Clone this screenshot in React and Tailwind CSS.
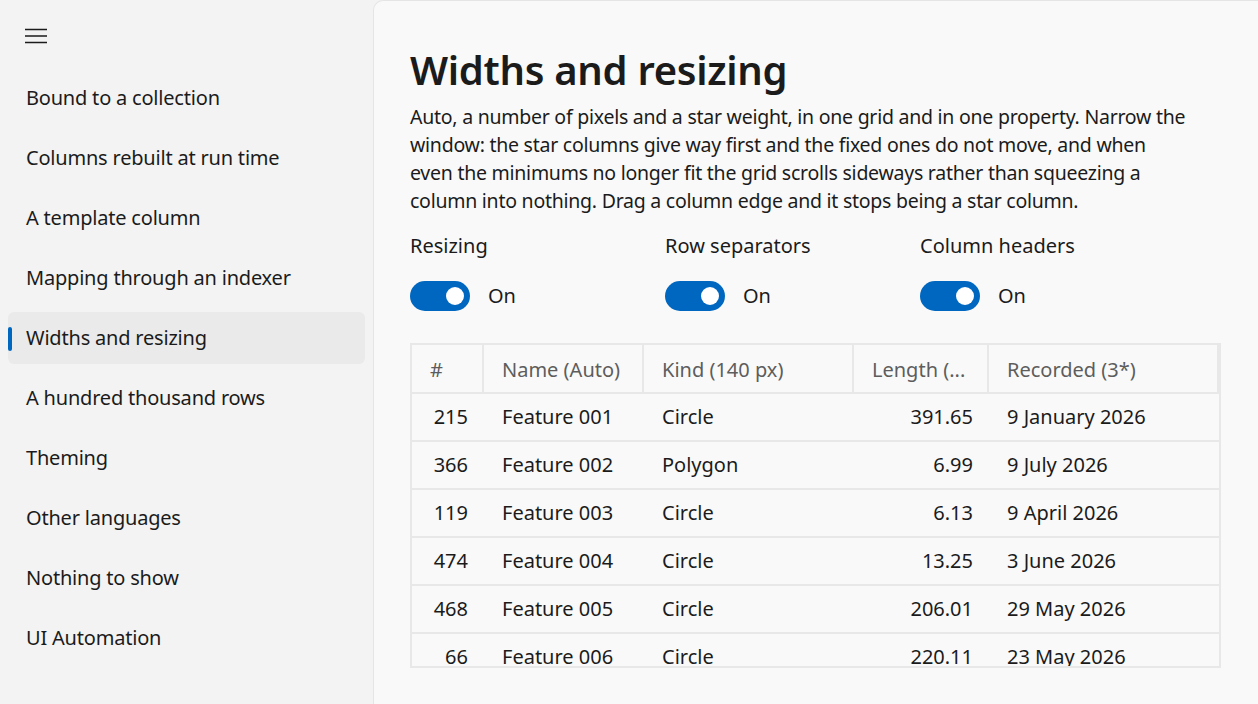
import React from "react";

const nav = [
  "Bound to a collection",
  "Columns rebuilt at run time",
  "A template column",
  "Mapping through an indexer",
  "Widths and resizing",
  "A hundred thousand rows",
  "Theming",
  "Other languages",
  "Nothing to show",
  "UI Automation",
];

const rows = [
  ["215", "Feature 001", "Circle", "391.65", "9 January 2026"],
  ["366", "Feature 002", "Polygon", "6.99", "9 July 2026"],
  ["119", "Feature 003", "Circle", "6.13", "9 April 2026"],
  ["474", "Feature 004", "Circle", "13.25", "3 June 2026"],
  ["468", "Feature 005", "Circle", "206.01", "29 May 2026"],
  ["66", "Feature 006", "Circle", "220.11", "23 May 2026"],
];

const cols = "grid grid-cols-[72px_160px_210px_135px_1fr]";

function Toggle({ label }) {
  return (
    <div className="w-[255px]">
      <div className="h-[30px] leading-[30px]">{label}</div>
      <div className="mt-[20px] flex items-center gap-[18px]">
        <div className="flex h-[30px] w-[60px] items-center justify-end rounded-full bg-[#0067c0] pr-[6px]">
          <div className="h-[18px] w-[18px] rounded-full bg-white" />
        </div>
        <span>On</span>
      </div>
    </div>
  );
}

export default function App() {
  return (
    <div
      className="flex h-[704px] w-[1258px] overflow-hidden bg-[#f3f3f3] text-[20px] text-[#1b1b1b]"
      style={{ fontFamily: "'Noto Sans', 'Segoe UI', sans-serif" }}
    >
      <aside className="w-[373px] shrink-0 px-[8px]">
        <div className="flex h-[72px] items-center pl-[17px]">
          <svg width="22" height="16" viewBox="0 0 22 16" stroke="#1b1b1b" strokeWidth="1.6">
            <path d="M0 1.5h22M0 8h22M0 14.5h22" />
          </svg>
        </div>
        <nav className="flex flex-col gap-[8px]">
          {nav.map((n) => {
            const on = n === "Widths and resizing";
            return (
              <div
                key={n}
                className={`relative flex h-[52px] items-center rounded-md pl-[18px] tracking-[-0.2px] ${
                  on ? "bg-[#eaeaea]" : ""
                }`}
              >
                {on && <span className="absolute left-0 top-[15px] h-[24px] w-[4px] rounded-full bg-[#0067c0]" />}
                {n}
              </div>
            );
          })}
        </nav>
      </aside>
      <main className="flex-1 rounded-tl-[10px] border-l border-t border-[#e5e5e5] bg-[#f9f9f9] pl-[36px] pt-[41px]">
        <h1 className="text-[40px] font-semibold leading-[56px] tracking-[-0.3px]">Widths and resizing</h1>
        <p className="mt-[5px] whitespace-nowrap text-[19.5px] leading-[28px] tracking-[-0.25px]">
          Auto, a number of pixels and a star weight, in one grid and in one property. Narrow the
          <br />
          window: the star columns give way first and the fixed ones do not move, and when
          <br />
          even the minimums no longer fit the grid scrolls sideways rather than squeezing a
          <br />
          column into nothing. Drag a column edge and it stops being a star column.
        </p>
        <div className="mt-[16px] flex">
          <Toggle label="Resizing" />
          <Toggle label="Row separators" />
          <Toggle label="Column headers" />
        </div>
        <div className="mt-[32px] h-[325px] w-[811px] overflow-hidden border-2 border-[#e8e8e8]">
          <div className={`${cols} h-[49px] items-center border-b-2 border-[#e8e8e8] text-[#5d5d5d]`}>
            <div className="h-full border-r-2 border-[#e8e8e8] pl-[18px] leading-[49px]">#</div>
            <div className="h-full border-r-2 border-[#e8e8e8] pl-[18px] leading-[49px]">Name (Auto)</div>
            <div className="h-full border-r-2 border-[#e8e8e8] pl-[18px] leading-[49px]">Kind (140 px)</div>
            <div className="h-full border-r-2 border-[#e8e8e8] pl-[18px] leading-[49px]">Length (...</div>
            <div className="h-full border-r-2 border-[#e8e8e8] pl-[18px] leading-[49px]">Recorded (3*)</div>
          </div>
          {rows.map((r) => (
            <div key={r[0]} className={`${cols} h-[48px] items-center border-b-2 border-[#e8e8e8]`}>
              <div className="pr-[16px] text-right">{r[0]}</div>
              <div className="pl-[18px]">{r[1]}</div>
              <div className="pl-[18px]">{r[2]}</div>
              <div className="pr-[16px] text-right">{r[3]}</div>
              <div className="pl-[18px]">{r[4]}</div>
            </div>
          ))}
        </div>
      </main>
    </div>
  );
}
